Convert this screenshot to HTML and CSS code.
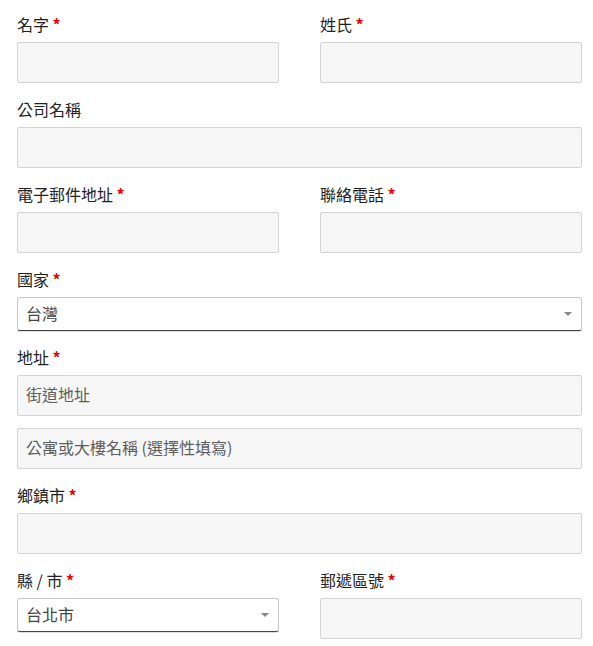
FILE: index.html
```html
<!DOCTYPE html>
<html lang="zh-Hant">
<head>
<meta charset="utf-8">
<title>帳單資料</title>
<link rel="stylesheet" href="styles.css">
</head>
<body>
<form class="form">
  <div class="field half">
    <label class="label">名字 <abbr class="req">*</abbr></label>
    <input class="input" type="text">
  </div>
  <div class="field half">
    <label class="label">姓氏 <abbr class="req">*</abbr></label>
    <input class="input" type="text">
  </div>
  <div class="field full">
    <label class="label">公司名稱</label>
    <input class="input" type="text">
  </div>
  <div class="field half">
    <label class="label">電子郵件地址 <abbr class="req">*</abbr></label>
    <input class="input" type="text">
  </div>
  <div class="field half">
    <label class="label">聯絡電話 <abbr class="req">*</abbr></label>
    <input class="input" type="text">
  </div>
  <div class="field full">
    <label class="label">國家 <abbr class="req">*</abbr></label>
    <div class="select"><span class="select-text">台灣</span><span class="arrow"></span></div>
  </div>
  <div class="field full">
    <label class="label">地址 <abbr class="req">*</abbr></label>
    <input class="input input-first" type="text" placeholder="街道地址">
    <input class="input" type="text" placeholder="公寓或大樓名稱 (選擇性填寫)">
  </div>
  <div class="field full">
    <label class="label">鄉鎮市 <abbr class="req">*</abbr></label>
    <input class="input" type="text">
  </div>
  <div class="field half">
    <label class="label">縣 / 市 <abbr class="req">*</abbr></label>
    <div class="select"><span class="select-text">台北市</span><span class="arrow"></span></div>
  </div>
  <div class="field half">
    <label class="label">郵遞區號 <abbr class="req">*</abbr></label>
    <input class="input" type="text">
  </div>
</form>
</body>
</html>
```

FILE: styles.css
```css
* { box-sizing: border-box; }
html, body { margin: 0; padding: 0; background: #fff; }
body {
  font-family: "Noto Sans CJK TC", "Liberation Sans", sans-serif;
  font-size: 16px;
  color: #333;
}
.form {
  display: grid;
  grid-template-columns: 262px 262px;
  column-gap: 41px;
  width: 565px;
  margin: 15px 0 0 17px;
  align-items: start;
}
.field { display: flex; flex-direction: column; margin-bottom: 17px; }
.full { grid-column: 1 / -1; }
.label {
  display: block;
  line-height: 18px;
  height: 21px;
  margin-bottom: 6px;
  font-size: 16px;
  color: #222;
}
.req {
  color: #e00;
  font-weight: 700;
  text-decoration: none;
  border: 0;
}
.input {
  display: block;
  width: 100%;
  height: 41px;
  margin: 0;
  padding: 0 8px 3px;
  border: 1px solid #d3d3d3;
  border-radius: 2px;
  background: #f6f6f6;
  font-family: inherit;
  font-size: 16px;
  color: #555;
  outline: none;
}
.input::placeholder { color: #5e5e5e; opacity: 1; }
.input-first { margin-bottom: 12px; }
.select {
  position: relative;
  display: flex;
  align-items: center;
  height: 34px;
  padding: 0 24px 3px 8px;
  background: #fff;
  border: 1px solid #c8c8c8;
  border-bottom-color: #444;
  border-radius: 3px;
  box-shadow: 0 1px 0 rgba(0,0,0,0.12);
  font-size: 16px;
  color: #444;
}
.select-text { line-height: 1; }
.arrow {
  position: absolute;
  right: 9px;
  top: 14px;
  width: 0;
  height: 0;
  border-left: 4px solid transparent;
  border-right: 4px solid transparent;
  border-top: 4px solid #888;
}
```
